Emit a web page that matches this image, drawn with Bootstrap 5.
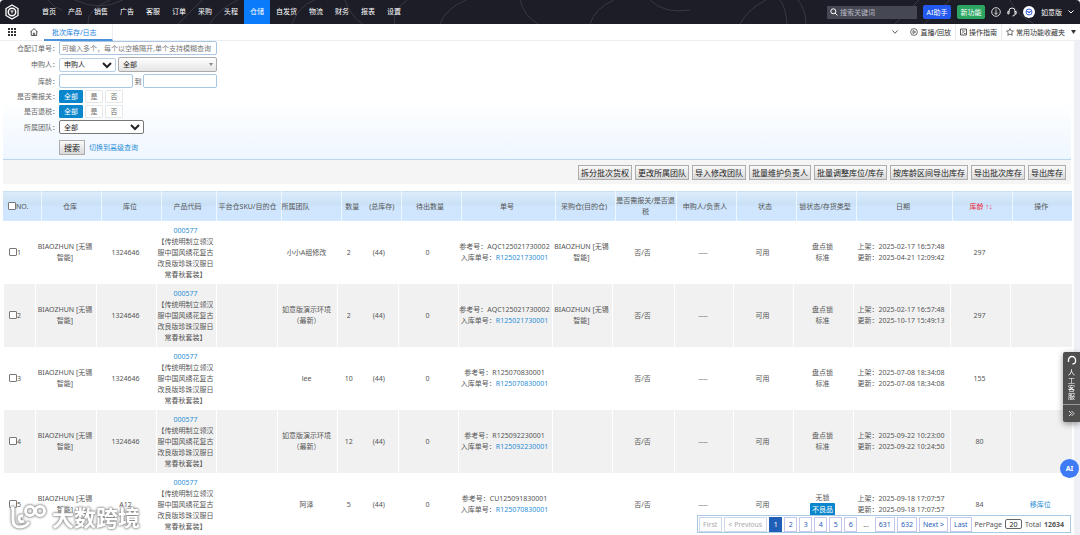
<!DOCTYPE html>
<html lang="zh-CN">
<head>
<meta charset="utf-8">
<meta name="viewport" content="width=device-width, initial-scale=1">
<title>批次库存/日志</title>
<link href="https://cdn.jsdelivr.net/npm/bootstrap@5.3.0/dist/css/bootstrap.min.css" rel="stylesheet">
<style>
body{font-family:"Noto Sans","Noto Sans CJK SC",sans-serif;font-size:7px;line-height:11px;color:#555;background:#fff}
a{text-decoration:none;color:#2b8fd6}
button,input,select{font-family:inherit;font-size:7px;line-height:11px}
svg{display:block;flex:none;fill:none;stroke:currentColor}
.topbar{height:24px;background:#1d1d27;color:#fff;border-radius:4px 4px 0 0;position:relative;overflow:hidden}
.arcs{position:absolute;inset:0;width:100%;height:24px;stroke:#393944}
.topbar .logo{width:16px;height:16px;margin:0 16px 0 4px}
.topbar .nav-link{padding:0 6px;line-height:24px;color:#fff}
.topbar .nav-link.active{background:#0a7cfb}
.tools{gap:6px;padding-right:6px}
.search-box{width:90px;height:13px;background:#454753;padding:0 3px}
.search-box input{background:none;border:0;color:#fff;padding:0 0 0 2px;outline:0}
.search-box input::placeholder{color:#b9bac2;opacity:1}
.pill{height:14px;border:0;border-radius:2px;color:#fff;padding:0;width:28px}
.pill-blue{background:#2359ef}.pill-green{background:#2ba561}
.avatar{width:12px;height:12px;border-radius:50%;background:#fff;color:#3a62d8}
.tabbar{height:17px;border-bottom:1px solid #eceef2;color:#333}
.tabbar .page-tab{width:69px;padding-left:8px;height:17px;line-height:17px;border-bottom:2px solid #4a92dc;border-right:1px solid #eceef2;color:#2080dd}
.tabbar .home{margin:4px 6px 0 14px}
.tabbar .cell{height:16px;padding:0 4px;gap:2px}
.tabbar .cell+.cell{border-left:1px solid #e6e8ec}
.tabbar a{color:#333}
.track{width:6px;background:#eef0f6}
.content{padding-left:3px;padding-right:3px}
.filters{height:119px;background:linear-gradient(#fff 50%,#eef6ff);border-bottom:1px solid #bcd6ee}
.filters label,.filters .lbl{width:56px;text-align:right;flex:none;color:#666}
.frow{margin-bottom:2px}
.fld{height:14px;border:1px solid #a9c6e2;border-radius:2px;padding:0 2px;background:#fff;color:#222;outline:0}
.fld::placeholder{color:#777;opacity:1}
select.fld{padding:0}
select.sel2{appearance:none;background:linear-gradient(#fff,#e4e4e4);border-color:#aaa;height:15px;width:99px;padding:0 4px}
.sel-wrap{position:relative;margin-left:2px}
.sel-wrap::after{content:"";position:absolute;right:4px;top:6px;border:2px solid transparent;border-top:3px solid #888}
.w-long{width:158px}.w-half{width:74px}.w-type{width:57px;border-color:#b9cfe4}.w-team{width:85px;border-color:#777}
.to{width:10px;text-align:center}
.opt{height:13px;line-height:11px;width:18px;border:1px solid #e7e7e7;border-radius:1px;padding:0;margin-right:2px;text-align:center;background:#fff;color:#666}
.opt-on{width:24px;background:#0a86cc;border-color:#0a86cc;color:#fff}
.gbtn{font-size:8px;height:15px;line-height:13px;border:1px solid #adadad;background:linear-gradient(#fafafa,#d9d9d9);color:#222;padding:0 2px;white-space:nowrap}
.find{width:26px}
.actions{height:24px;background:#f5f5f5;padding-right:5px}
.grid{table-layout:fixed;width:100%;text-align:center}
.grid th,.grid td{padding:0 2px 0 0;font-weight:400}
.grid .first{text-align:left;padding-left:5px;white-space:nowrap}
.grid input{appearance:none;width:8px;height:8px;border:1px solid #777;border-radius:1px;background:#fff;vertical-align:middle;margin:-2px 0 0}
.heads{margin-top:7px;border-top:1px solid #c9dff2;background:linear-gradient(#dcecfb,#c9e0f5 45%,#cfe6fe 55%,#cfe6fe)}
.heads th{height:29px;border-left:1px solid #eef6ff}
.heads th.first,.heads th.nb{border-left:0}
.sorted{color:#f02030}
.arrows{font-family:"Liberation Sans",sans-serif}
.rows{border-left:1px solid #dbe9f6}
.rows td{height:63px;border-left:1px solid #fff}
.rows tr:nth-child(even) td{background:#f1f1f1}
.rows td.nb{border-left:0}
.tagbad{display:inline-block;background:#0a86cc;color:#fff;padding:1px 2px;border-radius:1px}
.pager{position:fixed;right:9px;bottom:2px;height:18px;border:1px solid #a9c8e4;background:#fff;padding:0 6px 0 1px;color:#555;gap:3px}
.pager .pagination{gap:2px}
.pager .page-item .page-link{font-size:7px;line-height:11px;padding:1px 3px;margin:0;border:1px solid #c5c8ee;border-radius:0;color:#2a5db8;min-width:13px;text-align:center}
.pager .page-item.active .page-link{background:#1f5fb8;border-color:#1f5fb8;color:#fff}
.pager .page-item.disabled .page-link{color:#aaa;border-color:#cdd9ea;background:#fff;padding:1px 4px 1px 3px}
.pager input{width:17px;height:10px;border:1px solid #666;border-radius:2px;text-align:center;padding:0;color:#222}
.service{position:fixed;right:0;top:352px;width:17px;background:#4f4f4f;color:#fff;border-radius:2px 0 0 2px;box-shadow:0 2px 6px #0006}
.service button{background:none;border:0;color:#fff;padding:0;width:100%}
.service .talk{height:53px;border-bottom:1px solid #999;line-height:8px}
.service .talk span{width:8px}
.service .fold{height:17px}
.aibtn{position:fixed;right:1px;top:459px;width:19px;height:19px;border-radius:50%;border:0;background:#3f7bf5;color:#fff;font-weight:700;padding:0}
.wmark{position:fixed;left:9px;bottom:5px;color:#fff;pointer-events:none;filter:drop-shadow(0 0 1px #777) drop-shadow(0 0 1px #aaa)}
.wmark span{font-size:22px;line-height:26px;font-weight:700}
</style>
<script src="https://cdn.jsdelivr.net/npm/bootstrap@5.3.0/dist/js/bootstrap.bundle.min.js"></script>
</head>
<body class="vh-100 d-flex flex-column overflow-hidden">
<header class="topbar d-flex align-items-center flex-shrink-0">
  <svg class="arcs" viewBox="0 0 1080 24" preserveAspectRatio="none"><path d="M48 0q6 8 14 10M75 0q25 12 48 0M88 24q-2-14 22-24M178 24L202 0M210 24q8-15 28-24M292 24q6-17 22-24M345 0q5 16 18 24M395 24q-4-12 12-24M440 24q6-16 26-24M520 0q4 16 18 24M590 24q5-16 24-24M650 0q14 14 40 10M740 24q8-15 26-24M780 0q6 8 7 24M798 0q8 10 8 24M895 24l24-24M924 24l26-24M1010 0q6 14 24 24"/></svg>
  <svg class="logo position-relative" viewBox="0 0 16 16"><path d="M8 1l6 3.500v7L8 15l-6-3.500v-7z" stroke-width="1.300"/><circle cx="8" cy="8" r="3.700" stroke-width="1.500"/><path d="M6.500 7h3M8 7v2.500"/></svg>
  <nav class="nav flex-nowrap position-relative">
    <a class="nav-link" href="#">首页</a><a class="nav-link" href="#">产品</a><a class="nav-link" href="#">销售</a><a class="nav-link" href="#">广告</a><a class="nav-link" href="#">客服</a><a class="nav-link" href="#">订单</a><a class="nav-link" href="#">采购</a><a class="nav-link" href="#">头程</a><a class="nav-link active" href="#">仓储</a><a class="nav-link" href="#">自发货</a><a class="nav-link" href="#">物流</a><a class="nav-link" href="#">财务</a><a class="nav-link" href="#">报表</a><a class="nav-link" href="#">设置</a>
  </nav>
  <div class="tools d-flex align-items-center ms-auto position-relative">
    <div class="search-box d-flex align-items-center"><svg width="8" height="8" viewBox="0 0 8 8"><circle cx="3.300" cy="3.300" r="2.500"/><path d="M5 5l2.500 2.500"/></svg><input class="flex-fill w-100" type="search" placeholder="搜索关键词" aria-label="搜索关键词"></div>
    <button class="pill pill-blue">AI助手</button>
    <button class="pill pill-green">新功能</button>
    <svg width="10" height="10" viewBox="0 0 10 10" stroke-width=".8"><circle cx="5" cy="5" r="4.300"/><path d="M5 2.300v5M3.300 5.700L5 7.400l1.700-1.700"/></svg>
    <svg width="10" height="10" viewBox="0 0 10 10" stroke-width=".9"><path d="M2 5V4a3 3 0 0 1 6 0v1M2 4.500H.8v2.400H2V4.500M8 4.500h1.200v2.400H8V4.500M8 7q0 2-2.500 2"/></svg>
    <span class="avatar d-flex align-items-center justify-content-center"><svg width="8" height="8" viewBox="0 0 8 8"><circle cx="4" cy="4" r="3"/><path d="M2 3l2 2 2-2M4 5V3"/></svg></span>
    <span>如意版</span>
    <svg width="6" height="6" viewBox="0 0 6 6"><path d="M.5 1.500L3 4l2.500-2.500"/></svg>
  </div>
</header>
<div class="tabbar d-flex align-items-start flex-shrink-0">
  <svg class="mt-1 ms-2" width="8" height="8" viewBox="0 0 8 8" stroke-width="2"><path d="M0 1h8M0 4h8M0 7h8" stroke-dasharray="2 1"/></svg>
  <svg class="home" width="8" height="8" viewBox="0 0 8 8" stroke-width=".8"><path d="M.3 4L4 .6 7.700 4M1.300 3.300v4.200h5.400V3.300M3.300 7.500V5.200h1.400v2.300"/></svg>
  <a class="page-tab" href="#">批次库存/日志</a>
  <div class="d-flex align-items-center ms-auto">
    <svg class="me-1" width="6" height="6" viewBox="0 0 6 6" stroke-width=".8"><path d="M.5 1.500L3 4.300l2.500-2.800"/></svg>
    <a class="cell d-flex align-items-center ms-1" href="#"><svg width="8" height="8" viewBox="0 0 8 8" stroke-width=".7"><circle cx="4" cy="4" r="3.400"/><path d="M3 2.500L5.600 4 3 5.500z"/></svg>直播/回放</a>
    <a class="cell d-flex align-items-center" href="#"><svg width="7" height="8" viewBox="0 0 7 8" stroke-width=".8"><path d="M.5 1h6v6h-6zM2 5.500L5 2.500M2 2.800h1.500M4 5.500h1.500"/></svg>操作指南</a>
    <a class="cell d-flex align-items-center" href="#"><svg width="8" height="8" viewBox="0 0 8 8" stroke-width=".7"><path d="M4 .6l1 2.200 2.500.3-1.800 1.700.5 2.500L4 6.100 1.800 7.300l.5-2.500L.5 3.100 3 2.800z"/></svg>常用功能收藏夹<svg class="ms-1" width="5" height="4" viewBox="0 0 5 4"><path d="M0 0h5L2.500 4z" fill="currentColor" stroke="none"/></svg></a>
  </div>
</div>
<div class="d-flex flex-fill overflow-hidden">
<main class="content flex-fill overflow-hidden">
  <form class="filters">
    <div class="frow d-flex align-items-center"><label for="no">仓配订单号：</label><input id="no" class="fld w-long" placeholder="可输入多个，每个以空格隔开,单个支持模糊查询"></div>
    <div class="frow d-flex align-items-center"><label for="ty">申购人：</label><select id="ty" class="fld w-type"><option>申购人</option></select><span class="sel-wrap d-flex"><select class="fld sel2" aria-label="申购人"><option>全部</option></select></span></div>
    <div class="frow d-flex align-items-center"><label for="ag">库龄：</label><input id="ag" class="fld w-half"><span class="to">到</span><input class="fld w-half" aria-label="库龄上限"></div>
    <div class="frow d-flex align-items-center"><span class="lbl">是否需报关：</span><button type="button" class="opt opt-on">全部</button><button type="button" class="opt">是</button><button type="button" class="opt">否</button></div>
    <div class="frow d-flex align-items-center"><span class="lbl">是否退税：</span><button type="button" class="opt opt-on">全部</button><button type="button" class="opt">是</button><button type="button" class="opt">否</button></div>
    <div class="frow d-flex align-items-center"><label for="tm">所属团队：</label><select id="tm" class="fld w-team"><option>全部</option></select></div>
    <div class="d-flex align-items-center pt-1"><span class="lbl"></span><button type="button" class="gbtn find">搜索</button><a class="ms-1" href="#">切换到高级查询</a></div>
  </form>
  <div class="actions d-flex align-items-center justify-content-end">
    <div class="d-flex" style="gap:3px"><button class="gbtn">拆分批次货权</button><button class="gbtn">更改所属团队</button><button class="gbtn">导入修改团队</button><button class="gbtn">批量维护负责人</button><button class="gbtn">批量调整库位/库存</button><button class="gbtn">按库龄区间导出库存</button><button class="gbtn">导出批次库存</button><button class="gbtn">导出库存</button></div>
  </div>
  <table class="grid heads align-middle">
    <colgroup><col style="width:38px"><col style="width:60px"><col style="width:60px"><col style="width:55px"><col style="width:65px"><col style="width:60px"><col style="width:24px"><col style="width:36px"><col style="width:60px"><col style="width:94px"><col style="width:60px"><col style="width:61px"><col style="width:60px"><col style="width:60px"><col style="width:60px"><col style="width:96px"><col style="width:60px"><col style="width:60px"></colgroup>
    <thead><tr><th class="first"><input type="checkbox" aria-label="全选">NO.</th><th>仓库</th><th>库位</th><th>产品代码</th><th class="text-nowrap">平台仓SKU/目的仓</th><th class="text-start">所属团队</th><th>数量</th><th class="nb">(总库存)</th><th>待出数量</th><th>单号</th><th>采购仓(目的仓)</th><th class="p-0">是否需报关/是否退税</th><th>申购人/负责人</th><th>状态</th><th>锁状态/存货类型</th><th>日期</th><th class="sorted">库龄 <span class="arrows">↑↓</span></th><th>操作</th></tr></thead>
  </table>
  <table class="grid rows align-middle">
    <colgroup><col style="width:32px"><col style="width:61px"><col style="width:60px"><col style="width:60px"><col style="width:61px"><col style="width:60px"><col style="width:24px"><col style="width:37px"><col style="width:60px"><col style="width:94px"><col style="width:60px"><col style="width:62px"><col style="width:59px"><col style="width:60px"><col style="width:60px"><col style="width:97px"><col style="width:60px"><col style="width:61px"></colgroup>
    <tbody>
    <tr><td class="first"><label><input type="checkbox">1</label></td><td>BIAOZHUN [无锡智能]</td><td>1324646</td><td><a href="#">000577</a><br>【传统明制立领汉服中国风绣花复古改良版珍珠汉服日常春秋套装】</td><td></td><td>小小A组修改</td><td>2</td><td class="nb">(44)</td><td>0</td><td class="text-nowrap">参考号：AQC125021730002<br>入库单号：<a href="#">R125021730001</a></td><td>BIAOZHUN [无锡智能]</td><td>否/否</td><td>----</td><td>可用</td><td>盘点锁<br>标准</td><td>上架：2025-02-17 16:57:48<br>更新：2025-04-21 12:09:42</td><td>297</td><td></td></tr>
    <tr><td class="first"><label><input type="checkbox">2</label></td><td>BIAOZHUN [无锡智能]</td><td>1324646</td><td><a href="#">000577</a><br>【传统明制立领汉服中国风绣花复古改良版珍珠汉服日常春秋套装】</td><td></td><td>如意版演示环境（最新）</td><td>2</td><td class="nb">(44)</td><td>0</td><td class="text-nowrap">参考号：AQC125021730002<br>入库单号：<a href="#">R125021730001</a></td><td>BIAOZHUN [无锡智能]</td><td>否/否</td><td>----</td><td>可用</td><td>盘点锁<br>标准</td><td>上架：2025-02-17 16:57:48<br>更新：2025-10-17 15:49:13</td><td>297</td><td></td></tr>
    <tr><td class="first"><label><input type="checkbox">3</label></td><td>BIAOZHUN [无锡智能]</td><td>1324646</td><td><a href="#">000577</a><br>【传统明制立领汉服中国风绣花复古改良版珍珠汉服日常春秋套装】</td><td></td><td>lee</td><td>10</td><td class="nb">(44)</td><td>0</td><td class="text-nowrap">参考号：R125070830001<br>入库单号：<a href="#">R125070830001</a></td><td></td><td>否/否</td><td>----</td><td>可用</td><td>盘点锁<br>标准</td><td>上架：2025-07-08 18:34:08<br>更新：2025-07-08 18:34:08</td><td>155</td><td></td></tr>
    <tr><td class="first"><label><input type="checkbox">4</label></td><td>BIAOZHUN [无锡智能]</td><td>1324646</td><td><a href="#">000577</a><br>【传统明制立领汉服中国风绣花复古改良版珍珠汉服日常春秋套装】</td><td></td><td>如意版演示环境（最新）</td><td>12</td><td class="nb">(44)</td><td>0</td><td class="text-nowrap">参考号：R125092230001<br>入库单号：<a href="#">R125092230001</a></td><td></td><td>否/否</td><td>----</td><td>可用</td><td>盘点锁<br>标准</td><td>上架：2025-09-22 10:23:00<br>更新：2025-09-22 10:24:50</td><td>80</td><td></td></tr>
    <tr><td class="first"><label><input type="checkbox">5</label></td><td>BIAOZHUN [无锡智能]</td><td>A12</td><td><a href="#">000577</a><br>【传统明制立领汉服中国风绣花复古改良版珍珠汉服日常春秋套装】</td><td></td><td>阿泽</td><td>5</td><td class="nb">(44)</td><td>0</td><td class="text-nowrap">参考号：CU125091830001<br>入库单号：<a href="#">R125070830001</a></td><td></td><td>否/否</td><td>----</td><td>可用</td><td>无锁<br><span class="tagbad">不良品</span></td><td>上架：2025-09-18 17:07:57<br>更新：2025-09-18 17:07:57</td><td>84</td><td><a href="#">移库位</a></td></tr>
    </tbody>
  </table>
</main>
<div class="track flex-shrink-0"></div>
</div>
<nav class="pager d-flex align-items-center" aria-label="分页">
  <ul class="pagination mb-0 align-items-center">
    <li class="page-item disabled"><a class="page-link">First</a></li><li class="page-item disabled"><a class="page-link">&lt; Previous</a></li><li class="page-item active"><a class="page-link" href="#">1</a></li><li class="page-item"><a class="page-link" href="#">2</a></li><li class="page-item"><a class="page-link" href="#">3</a></li><li class="page-item"><a class="page-link" href="#">4</a></li><li class="page-item"><a class="page-link" href="#">5</a></li><li class="page-item"><a class="page-link" href="#">6</a></li><li class="px-1">...</li><li class="page-item"><a class="page-link" href="#">631</a></li><li class="page-item"><a class="page-link" href="#">632</a></li><li class="page-item"><a class="page-link" href="#">Next &gt;</a></li><li class="page-item"><a class="page-link" href="#">Last</a></li>
  </ul>
  <label for="pp">PerPage</label><input id="pp" value="20"><span>Total</span><b>12634</b>
</nav>
<aside class="service">
  <button class="talk d-flex flex-column align-items-center justify-content-center gap-1"><svg width="10" height="10" viewBox="0 0 10 10"><path d="M1.500 5.500V5a3.500 3.500 0 0 1 7 0v.5M1.500 5v2M8.500 5v2q-.5 2-3 2" stroke-width="1.300"/></svg><span>人工客服</span></button>
  <button class="fold d-flex align-items-center justify-content-center" aria-label="收起"><svg width="7" height="7" viewBox="0 0 7 7" stroke-width=".8"><path d="M1 1l2.500 2.500L1 6M3.500 1L6 3.500 3.500 6"/></svg></button>
</aside>
<button class="aibtn">AI</button>
<div class="wmark d-flex align-items-center gap-1"><svg width="39" height="26" viewBox="0 0 39 26" stroke-width="3"><path d="M2 4h2v12q0 7 7 7 6 0 9-5M14 12q-4-1-4 3 1 4 5 2"/><circle cx="21" cy="7" r="4.500"/><circle cx="31" cy="7" r="4.500"/></svg><span>大数跨境</span></div>
</body>
</html>
